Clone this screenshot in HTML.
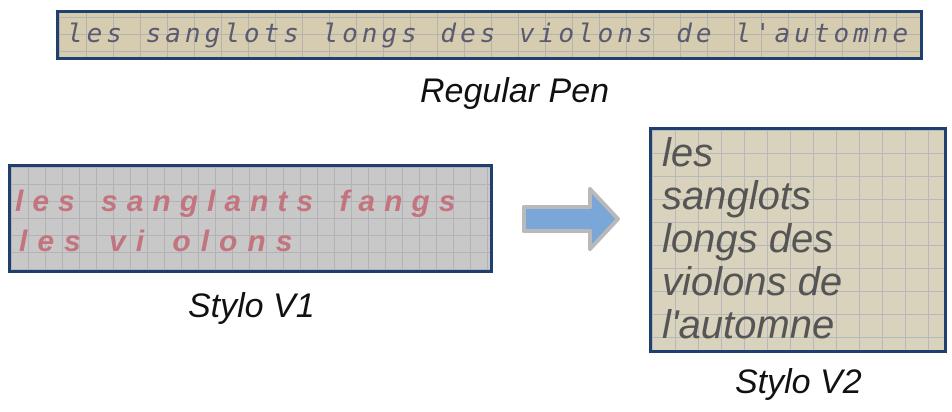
<!DOCTYPE html>
<html><head><meta charset="utf-8"><style>
html,body{margin:0;padding:0;background:#fff;}
body{width:952px;height:412px;position:relative;overflow:hidden;font-family:"Liberation Sans",sans-serif;}
.box{position:absolute;box-sizing:border-box;border:3px solid #1f3f6e;overflow:hidden;}
.lbl{position:absolute;font-style:italic;font-size:34px;color:#111;white-space:nowrap;}
.hw{position:absolute;white-space:nowrap;}
</style></head><body>

<div class="box" style="left:56px;top:10px;width:867px;height:50px;background-color:#d6cdb0;background-image:linear-gradient(#b5b2b0 1px,transparent 1px),linear-gradient(90deg,#b5b2b0 1px,transparent 1px);background-size:27px 17px;background-position:0 4px;">
<div class="hw" style="left:8px;top:6px;font-family:'DejaVu Sans Mono',monospace;font-size:26px;letter-spacing:4px;color:#5a5a72;font-style:italic;">les sanglots longs des violons de l'automne</div>
</div>
<div class="lbl" style="left:420px;top:72px;">Regular Pen</div>

<div class="box" style="left:8px;top:164px;width:485px;height:109px;background-color:#c9c8c8;background-image:linear-gradient(#b3b2b4 1px,transparent 1px),linear-gradient(90deg,#b3b2b4 1px,transparent 1px);background-size:17px 17px;">
<div class="hw" style="left:4px;top:18px;font-size:30px;letter-spacing:9px;color:#c2757e;font-weight:bold;font-style:italic;">les sanglants fangs</div>
<div class="hw" style="left:8px;top:58px;font-size:30px;letter-spacing:10px;color:#c2757e;font-weight:bold;font-style:italic;">les  vi olons</div>
</div>
<div class="lbl" style="left:188px;top:287px;">Stylo V1</div>

<svg style="position:absolute;left:518px;top:185px" width="106" height="72">
<path d="M6 22 H72 V4 L100 34 L72 64 V46 H6 Z" fill="#7ba6d8" stroke="#b9b9b9" stroke-width="4" stroke-linejoin="round"/>
</svg>

<div class="box" style="left:649px;top:127px;width:298px;height:226px;background-color:#d9d2bd;background-image:linear-gradient(#b8b7bc 1px,transparent 1px),linear-gradient(90deg,#b8b7bc 1px,transparent 1px);background-size:23px 23px;">
<div class="hw" style="left:10px;top:2px;font-size:40px;line-height:43px;color:#555;font-style:italic;">les<br>sanglots<br>longs des<br>violons de<br>l'automne</div>
</div>
<div class="lbl" style="left:735px;top:363px;">Stylo V2</div>

</body></html>
